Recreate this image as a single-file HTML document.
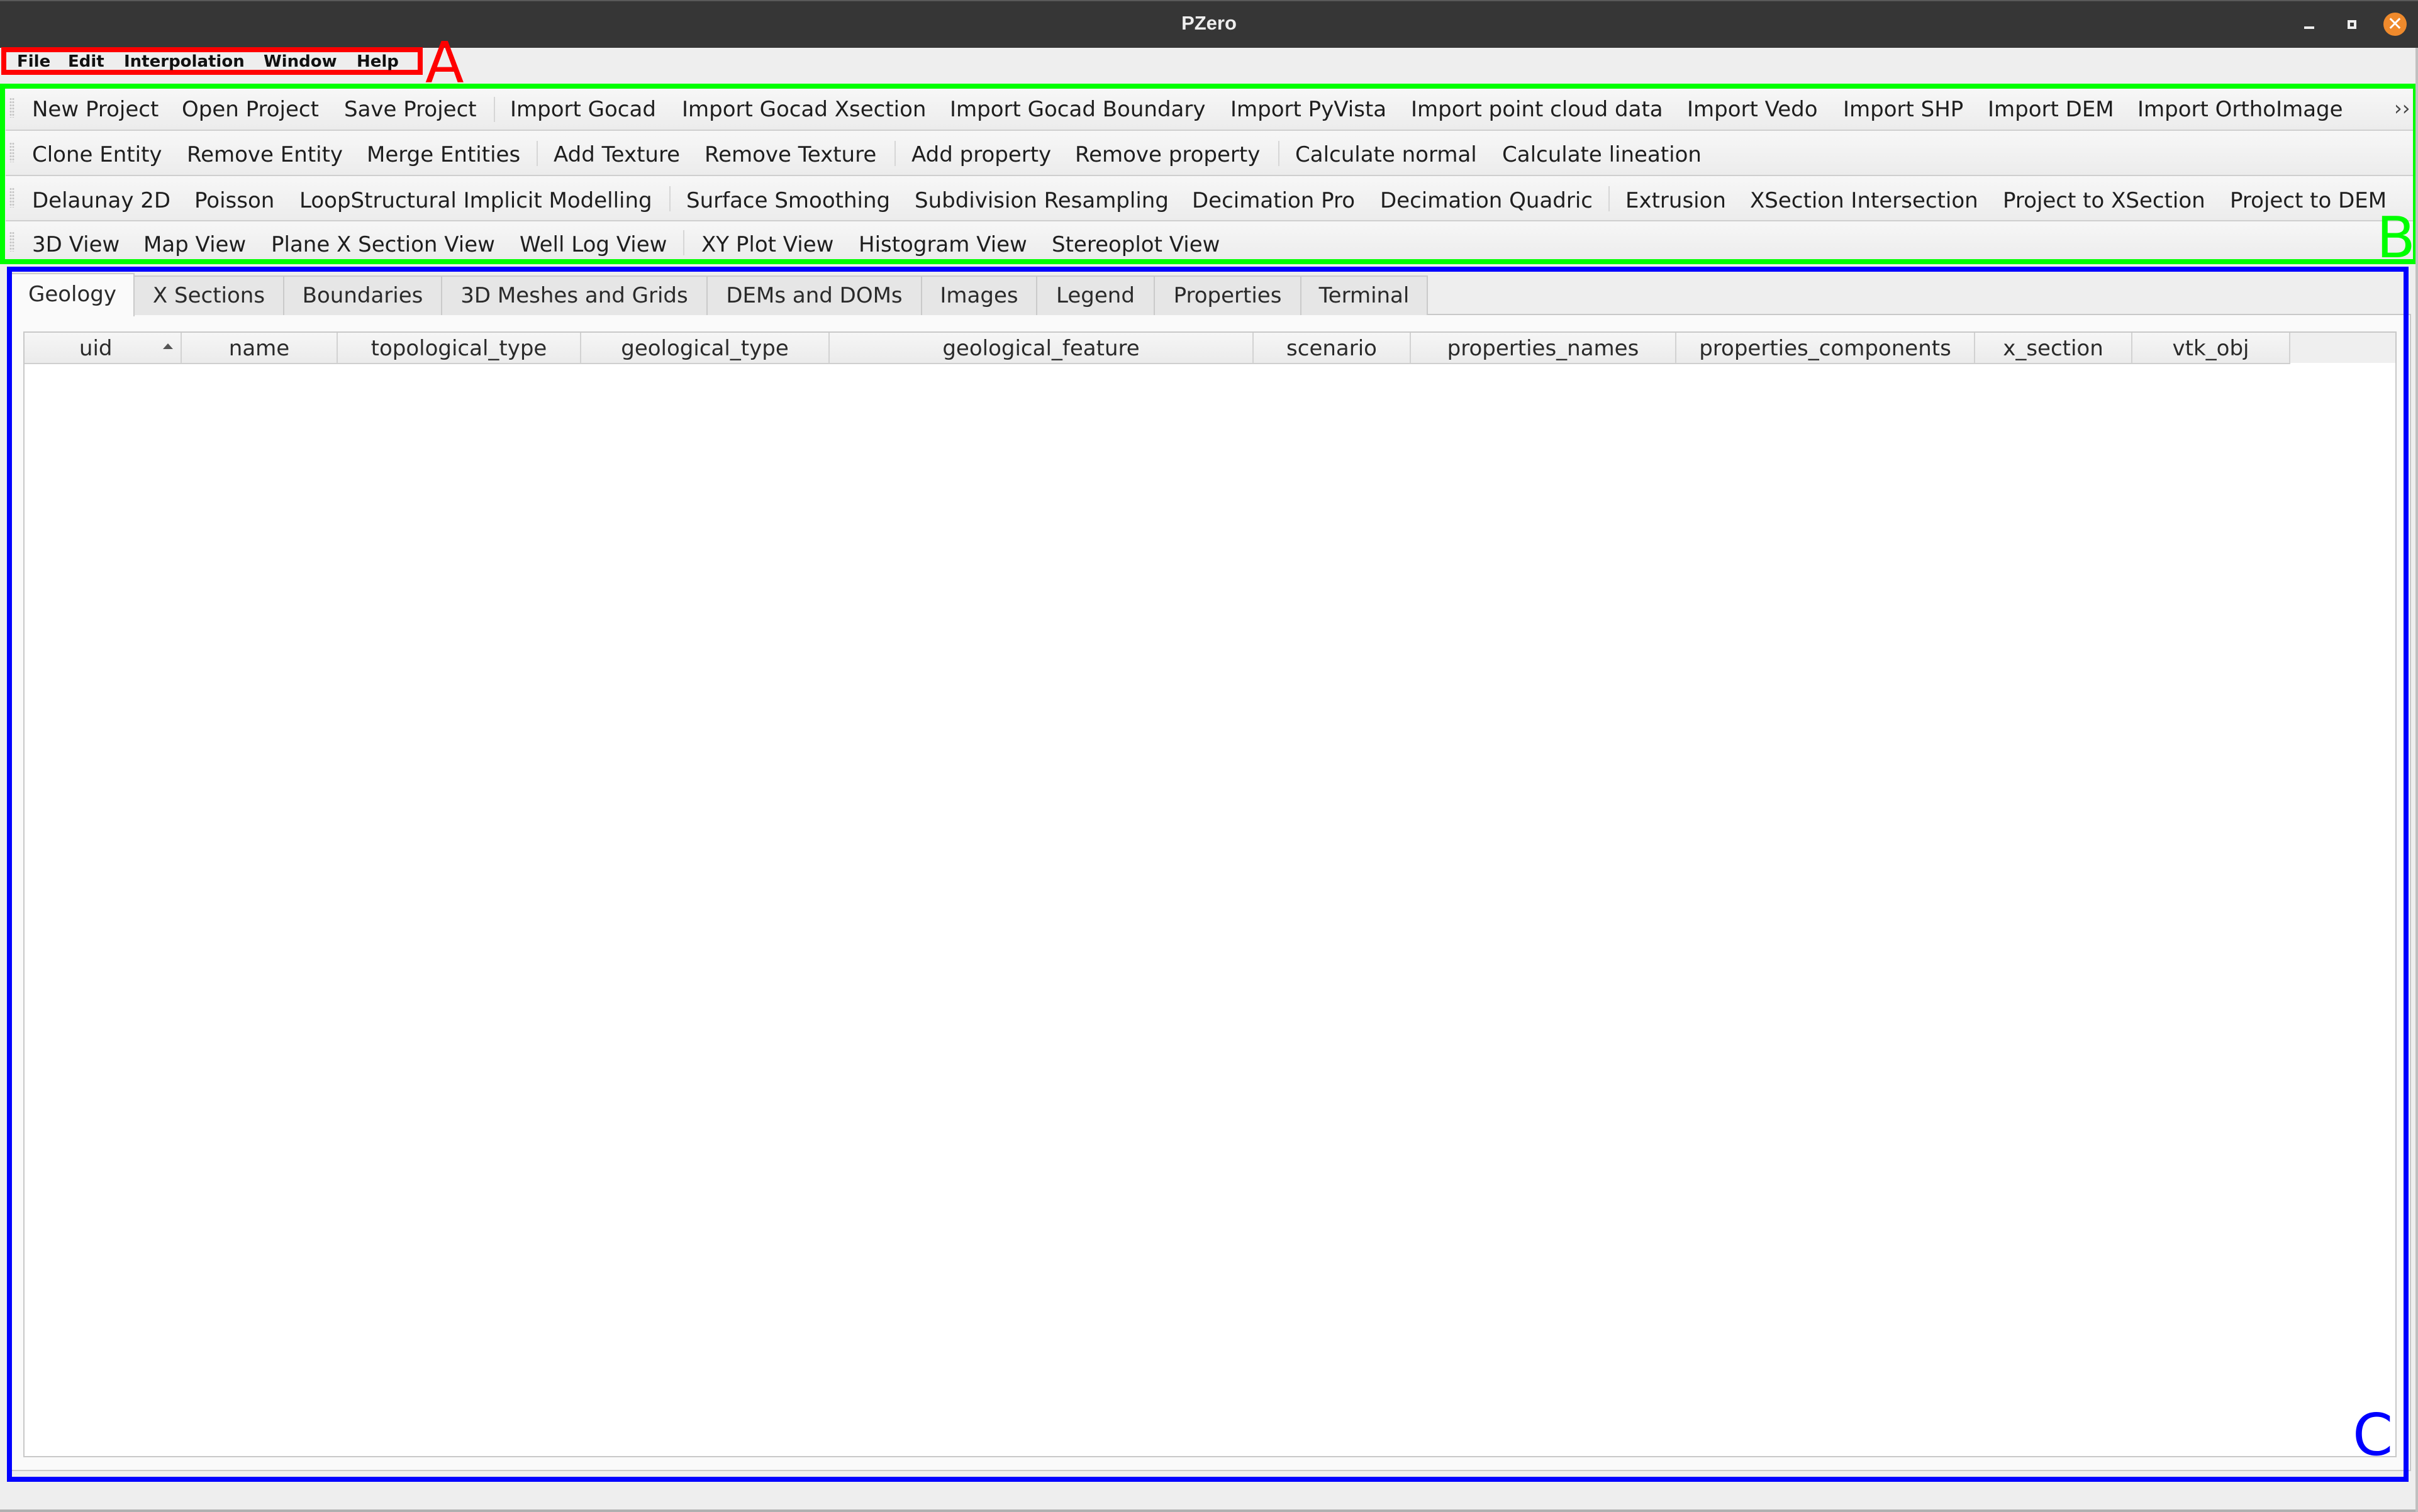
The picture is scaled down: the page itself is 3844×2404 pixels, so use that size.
<!DOCTYPE html>
<html><head><meta charset="utf-8">
<style>
*{margin:0;padding:0;box-sizing:border-box}
body{width:3844px;height:2404px;background:#eeeeee;position:relative;overflow:hidden;font-family:"DejaVu Sans","Liberation Sans",sans-serif;color:#222}
.a{position:absolute;white-space:nowrap}
.t{font-size:34px;line-height:34px;color:#1e1e1e}
.row{position:absolute;left:9px;right:6px;background:linear-gradient(#f7f7f7,#ececec);border-bottom:2px solid #cfcfcf}
.sep{position:absolute;width:2px;background:#d6d6d6}
.grip{position:absolute;left:15px;width:8px;background-image:radial-gradient(circle,#c4c4c4 1.3px,transparent 1.7px);background-size:4px 5px}
.tab{position:absolute;top:438px;height:63px;background:#e6e6e6;border:2px solid #cacaca;border-bottom:none;font-size:34px;line-height:60px;text-align:center;color:#2a2a2a}
.hc{position:absolute;top:527px;height:50px;border-right:2px solid #d2d2d2;font-size:34px;line-height:50px;text-align:center;color:#2a2a2a}
</style></head><body>
<!-- title bar -->
<div class="a" style="left:0;top:0;width:3844px;height:76px;background:#363636;border-top:2px solid #5a5a5a"></div>
<div class="a" style="left:0;top:17px;width:3844px;text-align:center;font-size:31px;line-height:40px;color:#eeeeee;font-family:'Liberation Sans',sans-serif;font-weight:bold">PZero</div>
<div class="a" style="left:3663px;top:42px;width:16px;height:4px;background:#eee"></div>
<div class="a" style="left:3732px;top:32px;width:14px;height:14px;border:4px solid #eee;background:#363636"></div>
<div class="a" style="left:3789px;top:20px;width:37px;height:37px;border-radius:50%;background:#ef8a2c;color:#fff;font-size:30px;line-height:37px;text-align:center;font-weight:bold">✕</div>
<!-- menu -->
<div class="a" style="left:2px;top:75px;width:670px;height:44px;border:8px solid #ff0000"></div>
<div class="a" style="left:27px;top:82px;font-size:26px;line-height:32px;font-weight:bold;color:#111">File</div>
<div class="a" style="left:108px;top:82px;font-size:26px;line-height:32px;font-weight:bold;color:#111">Edit</div>
<div class="a" style="left:197px;top:82px;font-size:26px;line-height:32px;font-weight:bold;color:#111">Interpolation</div>
<div class="a" style="left:419px;top:82px;font-size:26px;line-height:32px;font-weight:bold;color:#111">Window</div>
<div class="a" style="left:567px;top:82px;font-size:26px;line-height:32px;font-weight:bold;color:#111">Help</div>
<div class="a" style="left:676px;top:56px;font-size:90px;line-height:90px;color:#ff0000">A</div>
<!-- toolbars -->
<div class="row" style="top:141px;height:67px"></div>
<div class="row" style="top:208px;height:72px"></div>
<div class="row" style="top:280px;height:72px"></div>
<div class="row" style="top:352px;height:60px;border-bottom:none"></div>
<div class="grip" style="top:155px;height:32px"></div>
<div class="grip" style="top:226px;height:32px"></div>
<div class="grip" style="top:298px;height:32px"></div>
<div class="grip" style="top:368px;height:32px"></div>
<div class="sep" style="left:785px;top:154px;height:40px"></div>
<div class="sep" style="left:853px;top:224px;height:40px"></div>
<div class="sep" style="left:1422px;top:224px;height:40px"></div>
<div class="sep" style="left:2032px;top:224px;height:40px"></div>
<div class="sep" style="left:1064px;top:296px;height:40px"></div>
<div class="sep" style="left:2557px;top:296px;height:40px"></div>
<div class="sep" style="left:1086px;top:366px;height:40px"></div>
<!-- row1 -->
<div class="a t" style="top:157px;left:51px">New Project</div>
<div class="a t" style="top:157px;left:289px">Open Project</div>
<div class="a t" style="top:157px;left:547px">Save Project</div>
<div class="a t" style="top:157px;left:811px">Import Gocad</div>
<div class="a t" style="top:157px;left:1084px">Import Gocad Xsection</div>
<div class="a t" style="top:157px;left:1510px">Import Gocad Boundary</div>
<div class="a t" style="top:157px;left:1956px">Import PyVista</div>
<div class="a t" style="top:157px;left:2243px">Import point cloud data</div>
<div class="a t" style="top:157px;left:2682px">Import Vedo</div>
<div class="a t" style="top:157px;left:2930px">Import SHP</div>
<div class="a t" style="top:157px;left:3160px">Import DEM</div>
<div class="a t" style="top:157px;left:3398px">Import OrthoImage</div>
<div class="a t" style="top:155px;left:3806px;font-size:32px;color:#444">››</div>
<!-- row2 -->
<div class="a t" style="top:229px;left:51px">Clone Entity</div>
<div class="a t" style="top:229px;left:297px">Remove Entity</div>
<div class="a t" style="top:229px;left:583px">Merge Entities</div>
<div class="a t" style="top:229px;left:880px">Add Texture</div>
<div class="a t" style="top:229px;left:1120px">Remove Texture</div>
<div class="a t" style="top:229px;left:1449px">Add property</div>
<div class="a t" style="top:229px;left:1709px">Remove property</div>
<div class="a t" style="top:229px;left:2059px">Calculate normal</div>
<div class="a t" style="top:229px;left:2388px">Calculate lineation</div>
<!-- row3 -->
<div class="a t" style="top:302px;left:51px">Delaunay 2D</div>
<div class="a t" style="top:302px;left:309px">Poisson</div>
<div class="a t" style="top:302px;left:476px">LoopStructural Implicit Modelling</div>
<div class="a t" style="top:302px;left:1091px">Surface Smoothing</div>
<div class="a t" style="top:302px;left:1454px">Subdivision Resampling</div>
<div class="a t" style="top:302px;left:1895px">Decimation Pro</div>
<div class="a t" style="top:302px;left:2194px">Decimation Quadric</div>
<div class="a t" style="top:302px;left:2584px">Extrusion</div>
<div class="a t" style="top:302px;left:2782px">XSection Intersection</div>
<div class="a t" style="top:302px;left:3184px">Project to XSection</div>
<div class="a t" style="top:302px;left:3545px">Project to DEM</div>
<!-- row4 -->
<div class="a t" style="top:372px;left:51px">3D View</div>
<div class="a t" style="top:372px;left:228px">Map View</div>
<div class="a t" style="top:372px;left:431px">Plane X Section View</div>
<div class="a t" style="top:372px;left:826px">Well Log View</div>
<div class="a t" style="top:372px;left:1115px">XY Plot View</div>
<div class="a t" style="top:372px;left:1365px">Histogram View</div>
<div class="a t" style="top:372px;left:1672px">Stereoplot View</div>
<div class="a" style="left:0;top:133px;width:3844px;height:287px;border:8px solid #00ff00"></div>
<div class="a" style="left:3778px;top:334px;font-size:90px;line-height:90px;color:#00ff00">B</div>
<!-- tab pane -->
<div class="a" style="left:16px;top:499px;width:3817px;height:1840px;background:#fafafa;border:2px solid #c8c8c8"></div>
<div class="tab" style="left:212px;width:240px">X Sections</div>
<div class="tab" style="left:450px;width:253px">Boundaries</div>
<div class="tab" style="left:701px;width:424px">3D Meshes and Grids</div>
<div class="tab" style="left:1123px;width:343px">DEMs and DOMs</div>
<div class="tab" style="left:1464px;width:185px">Images</div>
<div class="tab" style="left:1647px;width:189px">Legend</div>
<div class="tab" style="left:1834px;width:235px">Properties</div>
<div class="tab" style="left:2067px;width:203px">Terminal</div>
<div class="tab" style="left:16px;top:434px;width:198px;height:69px;background:#fafafa;line-height:64px">Geology</div>
<!-- table -->
<div class="a" style="left:37px;top:527px;width:3773px;height:1790px;background:#fff;border:2px solid #c8c8c8"></div>
<div class="a" style="left:39px;top:529px;width:3769px;height:48px;background:#efefef"></div>
<div class="a" style="left:39px;top:529px;width:3602px;height:50px;background:linear-gradient(#f6f6f6,#ebebeb);border-bottom:2px solid #cfcfcf"></div>
<div class="hc" style="left:39px;width:250px;top:529px;height:48px">uid&nbsp;&nbsp;</div>
<div class="a" style="left:259px;top:546px;width:0;height:0;border-left:8px solid transparent;border-right:8px solid transparent;border-bottom:9px solid #555"></div>
<div class="hc" style="left:289px;width:248px;top:529px;height:48px">name</div>
<div class="hc" style="left:537px;width:387px;top:529px;height:48px">topological_type</div>
<div class="hc" style="left:924px;width:395px;top:529px;height:48px">geological_type</div>
<div class="hc" style="left:1319px;width:674px;top:529px;height:48px">geological_feature</div>
<div class="hc" style="left:1993px;width:250px;top:529px;height:48px">scenario</div>
<div class="hc" style="left:2243px;width:422px;top:529px;height:48px">properties_names</div>
<div class="hc" style="left:2665px;width:475px;top:529px;height:48px">properties_components</div>
<div class="hc" style="left:3140px;width:250px;top:529px;height:48px">x_section</div>
<div class="hc" style="left:3390px;width:251px;top:529px;height:48px">vtk_obj</div>
<!-- blue box -->
<div class="a" style="left:11px;top:424px;width:3818px;height:1932px;border:8px solid #0000ff"></div>
<div class="a" style="left:3740px;top:2236px;font-size:92px;line-height:92px;color:#0000ff">C</div>
<!-- window border -->
<div class="a" style="left:0;top:2400px;width:3844px;height:4px;background:#b0b0b0"></div>
<div class="a" style="left:3840px;top:76px;width:4px;height:2328px;background:#c0c0c0"></div>
</body></html>
